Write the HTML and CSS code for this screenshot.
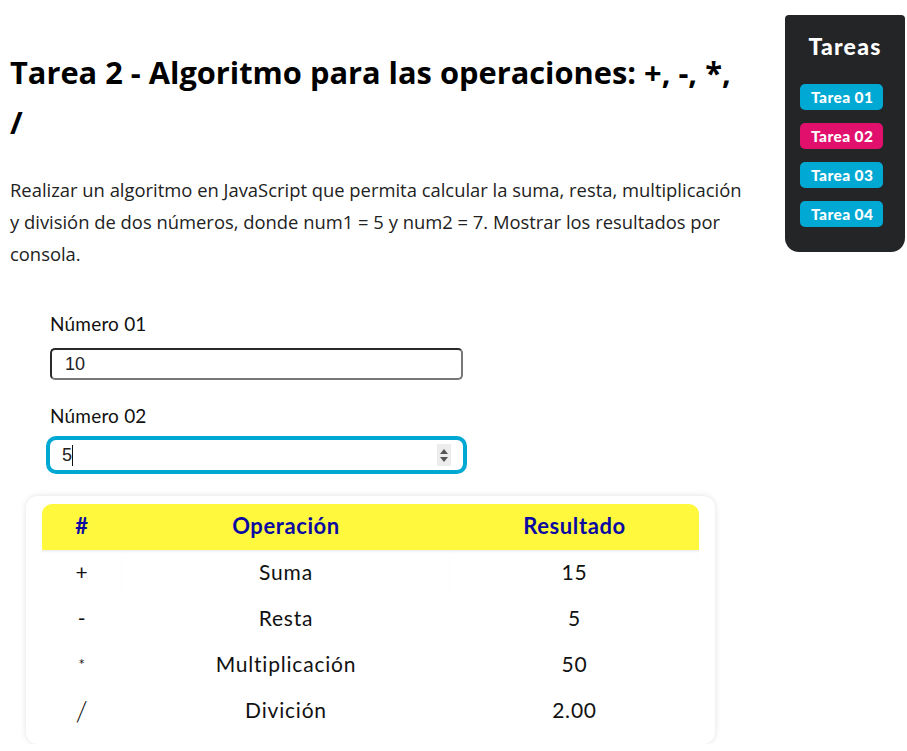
FILE: index.html
```html
<!DOCTYPE html>
<html lang="es">
<head>
<meta charset="utf-8">
<title>Tarea 2</title>
<link rel="stylesheet" href="styles.css">
</head>
<body>
<div class="page">
  <main class="main">
    <h1 class="title">Tarea 2 - Algoritmo para las operaciones: +, -, *, /</h1>
    <p class="desc">Realizar un algoritmo en JavaScript que permita calcular la suma, resta, multiplicación y división de dos números, donde num1 = 5 y num2 = 7. Mostrar los resultados por consola.</p>
    <form class="form">
      <label class="label" for="n1">Número 01</label>
      <input class="field" id="n1" type="text" value="10">
      <label class="label" for="n2">Número 02</label>
      <div class="field-wrap">
        <input class="field focused" id="n2" type="text" value="5">
        <span class="caret"></span>
        <span class="spin"><span class="up"></span><span class="down"></span></span>
      </div>
    </form>
    <div class="card">
      <table class="tbl">
        <thead>
          <tr><th class="c1">#</th><th class="c2">Operación</th><th class="c3">Resultado</th></tr>
        </thead>
        <tbody>
          <tr><td>+</td><td>Suma</td><td>15</td></tr>
          <tr><td>-</td><td>Resta</td><td>5</td></tr>
          <tr><td class="star">*</td><td>Multiplicación</td><td>50</td></tr>
          <tr><td class="slash">/</td><td>Divición</td><td>2.00</td></tr>
        </tbody>
      </table>
    </div>
  </main>
  <aside class="side">
    <h2 class="side-title">Tareas</h2>
    <a class="btn">Tarea 01</a>
    <a class="btn active">Tarea 02</a>
    <a class="btn">Tarea 03</a>
    <a class="btn">Tarea 04</a>
  </aside>
</div>
</body>
</html>
```

FILE: styles.css
```css
* { box-sizing: border-box; }
html, body { margin: 0; padding: 0; background: #fff; }
body { font-family: "Open Sans", "Noto Sans", sans-serif; color: #222; }

.page {
  display: flex;
  align-items: flex-start;
  width: 907px;
}

.main {
  width: 785px;
  padding-left: 10px;
}

.title {
  margin: 47px 0 0 0;
  width: 738px;
  font-family: "Open Sans", sans-serif;
  font-weight: 700;
  font-size: 30.8px;
  line-height: 50px;
  letter-spacing: 0;
  color: #000;
}

.desc {
  margin: 27px 0 0 0;
  width: 735px;
  font-family: "Open Sans", sans-serif;
  font-size: 18.4px;
  line-height: 32px;
  color: #222;
  letter-spacing: 0;
}

.form {
  display: flex;
  flex-direction: column;
  margin: 42px 0 0 40px;
  width: 414px;
}

.label {
  font-family: "Lato", sans-serif;
  font-size: 19px;
  line-height: 24px;
  color: #111;
  margin-bottom: 12px;
  letter-spacing: 0.2px;
}

.field {
  width: 413px;
  height: 32px;
  border: 2px solid #2a2a2a;
  border-right-color: #777;
  border-bottom-color: #777;
  border-radius: 5px;
  padding: 0 13px;
  font-family: "Liberation Sans", Arial, sans-serif;
  font-size: 18px;
  color: #222;
  margin-bottom: 24px;
  outline: none;
}

.field-wrap {
  position: relative;
  width: 413px;
}

.field.focused {
  height: 30px;
  border: 0;
  padding-left: 12px;
  outline: 4px solid #00a8d4;
  outline-offset: 0;
  border-radius: 6px;
  margin-bottom: 0;
}

.caret {
  position: absolute;
  left: 22px;
  top: 5px;
  width: 1px;
  height: 21px;
  background: #111;
}

.spin {
  position: absolute;
  right: 12px;
  top: 4px;
  width: 14px;
  height: 22px;
  background: #ececec;
  display: flex;
  flex-direction: column;
  align-items: center;
  justify-content: center;
  gap: 3px;
}
.spin .up {
  width: 0; height: 0;
  border-left: 4px solid transparent;
  border-right: 4px solid transparent;
  border-bottom: 5px solid #555;
}
.spin .down {
  width: 0; height: 0;
  border-left: 4px solid transparent;
  border-right: 4px solid transparent;
  border-top: 5px solid #555;
}

.card {
  margin: 26px 0 0 16px;
  width: 689px;
  background: #fff;
  border-radius: 12px;
  box-shadow: 0 0 6px rgba(0,0,0,0.12);
  padding: 8px 16px 10px 16px;
}

.tbl {
  width: 657px;
  border-collapse: collapse;
  font-family: "Lato", sans-serif;
  font-size: 21px;
  letter-spacing: 0.8px;
  color: #111;
  text-align: center;
}

.tbl thead th {
  background: #fff83c;
  color: #0a0aa3;
  font-weight: 700;
  font-size: 22px;
  letter-spacing: 0.6px;
  height: 46px;
  padding: 0 0 4px 0;
}
.tbl th.c1 { width: 80px; border-top-left-radius: 10px; }
.tbl th.c2 { width: 328px; }
.tbl th.c3 { width: 249px; border-top-right-radius: 10px; }

.tbl td {
  height: 46px;
  padding: 0 0 3px 0;
  font-weight: 400;
}
.tbl tbody tr:first-child td {
  box-shadow: inset 0 3px 3px -2px rgba(0,0,0,0.10);
}
.tbl td.star { font-size: 15px; }
.tbl td.slash { font-size: 28px; font-weight: 300; }

.side {
  width: 120px;
  margin-top: 15px;
  background: #242527;
  border-radius: 4px 4px 14px 14px;
  padding: 18px 0 25px 15px;
  display: flex;
  flex-direction: column;
  align-items: flex-start;
  gap: 13px;
}

.side-title {
  align-self: stretch;
  margin: 0 15px 12px 0;
  text-align: center;
  font-family: "Lato", sans-serif;
  font-weight: 900;
  font-size: 23px;
  line-height: 26px;
  letter-spacing: 1.2px;
  color: #fff;
}

.btn {
  display: block;
  background: #00a8d4;
  color: #fff;
  font-family: "Lato", sans-serif;
  font-weight: 900;
  font-size: 15.5px;
  line-height: 26px;
  letter-spacing: 0.4px;
  padding: 0 10px 0 11px;
  border-radius: 5px;
  cursor: pointer;
}
.btn.active { background: #e1106c; }
```
